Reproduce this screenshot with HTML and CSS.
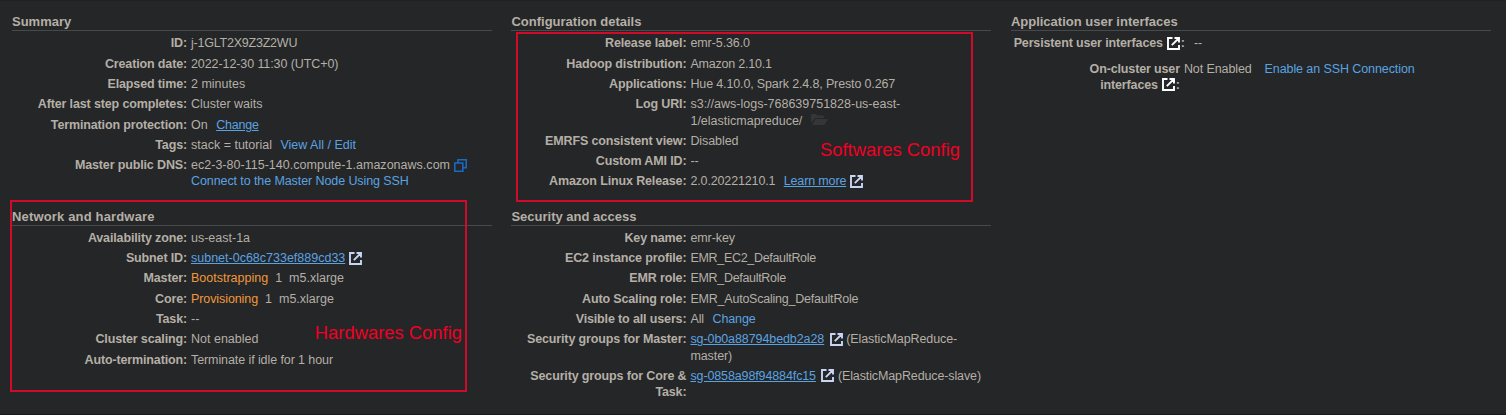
FILE: index.html
```html
<!DOCTYPE html>
<html lang="en">
<head>
<meta charset="utf-8">
<title>Cluster details</title>
<link rel="stylesheet" href="styles.css">
</head>
<body>
<svg width="0" height="0" class="defs">
  <symbol id="external" viewBox="0 0 13 13"><path d="M5.500 1H1v11h11V8M7.500 1H12v4.500M11.500 1.500 4.800 8.200" fill="none" stroke="currentColor" stroke-width="1.900"/></symbol>
  <symbol id="copy" viewBox="0 0 13 13"><path d="M.8 4h8v8.200h-8zM4 4V.8h8.200v8H9" fill="none" stroke="currentColor" stroke-width="1.600"/></symbol>
  <symbol id="folder" viewBox="0 0 17 13"><path d="M0 10V2Q0 1 1 1h4l1.500 1.500H12q1 0 1 1V5H5Q4 5 3.300 6zM1 12 4.300 6.500Q4.700 6 5.500 6H16q1 0 .5 1l-2.500 4q-.6 1-1.500 1z" fill="currentColor"/></symbol>
</svg>
<main class="board">
  <div class="column">
    <section class="panel">
      <h2>Summary</h2>
      <dl>
        <dt>ID:</dt><dd class="tight">j-1GLT2X9Z3Z2WU</dd>
        <dt>Creation date:</dt><dd class="snug">2022-12-30 11:30 (UTC+0)</dd>
        <dt>Elapsed time:</dt><dd>2 minutes</dd>
        <dt>After last step completes:</dt><dd>Cluster waits</dd>
        <dt>Termination protection:</dt><dd>On <a class="spaced underlined tight">Change</a></dd>
        <dt>Tags:</dt><dd>stack = tutorial <a class="spaced">View All / Edit</a></dd>
        <dt>Master public DNS:</dt><dd><span class="dns">ec2-3-80-115-140.compute-1.amazonaws.com</span><svg class="icon copy"><use href="#copy"/></svg><br><a class="snug">Connect to the Master Node Using SSH</a></dd>
      </dl>
    </section>
    <section class="panel">
      <h2 class="loose">Network and hardware</h2>
      <dl>
        <dt>Availability zone:</dt><dd>us-east-1a</dd>
        <dt>Subnet ID:</dt><dd><a class="underlined">subnet-0c68c733ef889cd33</a><svg class="icon"><use href="#external"/></svg></dd>
        <dt>Master:</dt><dd><span class="status">Bootstrapping</span><span class="count">1</span><span class="count">m5.xlarge</span></dd>
        <dt>Core:</dt><dd><span class="status snug">Provisioning</span><span class="count">1</span><span class="count">m5.xlarge</span></dd>
        <dt>Task:</dt><dd>--</dd>
        <dt>Cluster scaling:</dt><dd>Not enabled</dd>
        <dt>Auto-termination:</dt><dd class="snug">Terminate if idle for 1 hour</dd>
      </dl>
    </section>
  </div>
  <div class="column">
    <section class="panel">
      <h2>Configuration details</h2>
      <dl>
        <dt>Release label:</dt><dd class="snug">emr-5.36.0</dd>
        <dt>Hadoop distribution:</dt><dd class="tight">Amazon 2.10.1</dd>
        <dt>Applications:</dt><dd class="apps">Hue 4.10.0, Spark 2.4.8, Presto 0.267</dd>
        <dt>Log URI:</dt><dd>s3://aws-logs-768639751828-us-east-<br>1/elasticmapreduce/<svg class="icon folder"><use href="#folder"/></svg></dd>
        <dt>EMRFS consistent view:</dt><dd class="snug">Disabled</dd>
        <dt>Custom AMI ID:</dt><dd>--</dd>
        <dt>Amazon Linux Release:</dt><dd class="release">2.0.20221210.1 <a class="spaced underlined">Learn more</a><svg class="icon"><use href="#external"/></svg></dd>
      </dl>
    </section>
    <section class="panel">
      <h2>Security and access</h2>
      <dl>
        <dt>Key name:</dt><dd class="snug">emr-key</dd>
        <dt>EC2 instance profile:</dt><dd class="role">EMR_EC2_DefaultRole</dd>
        <dt>EMR role:</dt><dd class="role">EMR_DefaultRole</dd>
        <dt>Auto Scaling role:</dt><dd class="tight">EMR_AutoScaling_DefaultRole</dd>
        <dt>Visible to all users:</dt><dd class="snug">All <a class="spaced">Change</a></dd>
        <dt>Security groups for Master:</dt><dd class="snug"><a class="underlined">sg-0b0a88794bedb2a28</a><svg class="icon group"><use href="#external"/></svg>(ElasticMapReduce-<br>master)</dd>
        <dt>Security groups for Core &amp;<br>Task:</dt><dd class="slave"><a class="underlined">sg-0858a98f94884fc15</a><svg class="icon group"><use href="#external"/></svg>(ElasticMapReduce-slave)</dd>
      </dl>
    </section>
  </div>
  <div class="column">
    <section class="panel">
      <h2>Application user interfaces</h2>
      <dl class="persistent">
        <dt>Persistent user interfaces<svg class="icon white"><use href="#external"/></svg>:</dt><dd>--</dd>
      </dl>
      <dl class="oncluster">
        <dt>On-cluster user<br>interfaces<svg class="icon white"><use href="#external"/></svg>:</dt><dd class="snug">Not Enabled <a class="spaced">Enable an SSH Connection</a></dd>
      </dl>
    </section>
  </div>
</main>
<div class="callout software"><span>Softwares Config</span></div>
<div class="callout hardware"><span>Hardwares Config</span></div>
</body>
</html>
```

FILE: styles.css
```css
* { box-sizing: border-box; }
body {
  margin: 0;
  height: 415px;
  overflow: hidden;
  position: relative;
  background: #242628;
  border-top: 1px solid #1f2123;
  border-bottom: 1px solid #17191a;
  color: #b5afa6;
  font: 12.5px/16.3px "Liberation Sans", Arial, sans-serif;
}
.defs { position: absolute; }
.board {
  display: grid;
  grid-template-columns: repeat(3, 480px);
  column-gap: 19.45px;
  padding: 12px 0 0 12px;
}
.panel { height: 194.5px; }
h2 {
  margin: 0;
  height: 18px;
  border-bottom: 1px solid #48494b;
  font-size: 13px;
  line-height: 17px;
  white-space: nowrap;
}
.loose { letter-spacing: 0.16px; }
dl {
  display: grid;
  grid-template-columns: 175px 1fr;
  column-gap: 4px;
  row-gap: 4px;
  margin: 0;
  padding-top: 4.4px;
}
dt {
  font-weight: bold;
  text-align: right;
  white-space: nowrap;
  letter-spacing: -0.14px;
}
dd { margin: 0; white-space: nowrap; }
a { color: #5ba3e0; }
.underlined { text-decoration: underline; }
.snug { letter-spacing: -0.09px; }
.tight { letter-spacing: -0.22px; }
.role { letter-spacing: -0.31px; }
.apps { letter-spacing: -0.14px; }
.release { letter-spacing: -0.14px; }
.slave { letter-spacing: -0.12px; }
.dns { letter-spacing: 0.02px; }
.spaced { margin-left: 5px; }
.status { color: #f1983b; }
.count { margin-left: 7px; }
.icon {
  width: 13px;
  height: 13px;
  margin: -2px 0 -2px 4px;
  vertical-align: -0.4px;
  color: #c9d5f5;
}
.icon.copy { color: #1b68c4; }
.icon.folder { width: 17px; margin-left: 9px; color: #343638; vertical-align: 0.4px; }
.icon.group { margin: -2px 3.5px -2px 5.5px; }
.icon.white { margin-right: 1px; color: #fff; }
.persistent { grid-template-columns: 174px 1fr; column-gap: 9px; }
.oncluster { grid-template-columns: 169px 1fr; padding-top: 9px; }
.oncluster .spaced { margin-left: 9.5px; }
.callout {
  position: absolute;
  width: 457px;
  border: 2px solid #d00a28;
  color: #f00024;
  font-size: 18.4px;
  line-height: 22px;
  display: flex;
  justify-content: flex-end;
  align-items: flex-end;
}
.software { left: 516px; top: 31px; height: 170px; padding: 0 11px 39px 0; }
.hardware { left: 10px; top: 199px; height: 192px; padding: 0 3px 46px 0; }
```
